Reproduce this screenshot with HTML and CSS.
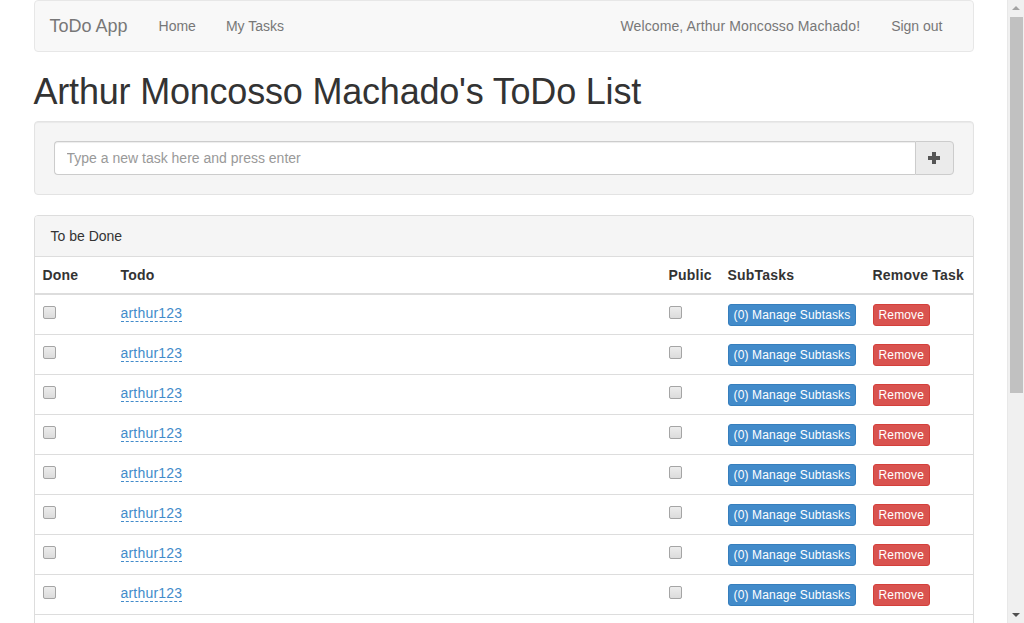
FILE: index.html
```html
<!DOCTYPE html>
<html lang="en">
<head>
<meta charset="utf-8">
<title>ToDo App</title>
<link rel="stylesheet" href="styles.css">
</head>
<body>
<div class="container">
  <nav class="navbar">
    <div class="nav-left">
      <a class="brand" href="#">ToDo App</a>
      <a class="nav-link" href="#">Home</a>
      <a class="nav-link" href="#">My Tasks</a>
    </div>
    <div class="nav-right">
      <span class="nav-link">Welcome, Arthur Moncosso Machado!</span>
      <a class="nav-link" href="#">Sign out</a>
    </div>
  </nav>

  <h1 class="title">Arthur Moncosso Machado's ToDo List</h1>

  <div class="well">
    <div class="input-group">
      <input class="form-control" type="text" placeholder="Type a new task here and press enter">
      <button class="btn-add" type="button" aria-label="Add">
        <svg width="12" height="12" viewBox="0 0 12 12"><path d="M4 0h4v4h4v4H8v4H4V8H0V4h4z" fill="#555"/></svg>
      </button>
    </div>
  </div>

  <div class="panel">
    <div class="panel-heading">To be Done</div>
    <table class="table">
      <colgroup>
        <col class="c-done"><col><col class="c-public"><col class="c-sub"><col class="c-remove">
      </colgroup>
      <thead>
        <tr><th>Done</th><th>Todo</th><th>Public</th><th>SubTasks</th><th>Remove Task</th></tr>
      </thead>
      <tbody>
        <tr><td><input type="checkbox" class="cb"></td><td><a class="editable" href="#">arthur123</a></td><td><input type="checkbox" class="cb"></td><td><button class="btn btn-primary">(0) Manage Subtasks</button></td><td><button class="btn btn-danger">Remove</button></td></tr>
        <tr><td><input type="checkbox" class="cb"></td><td><a class="editable" href="#">arthur123</a></td><td><input type="checkbox" class="cb"></td><td><button class="btn btn-primary">(0) Manage Subtasks</button></td><td><button class="btn btn-danger">Remove</button></td></tr>
        <tr><td><input type="checkbox" class="cb"></td><td><a class="editable" href="#">arthur123</a></td><td><input type="checkbox" class="cb"></td><td><button class="btn btn-primary">(0) Manage Subtasks</button></td><td><button class="btn btn-danger">Remove</button></td></tr>
        <tr><td><input type="checkbox" class="cb"></td><td><a class="editable" href="#">arthur123</a></td><td><input type="checkbox" class="cb"></td><td><button class="btn btn-primary">(0) Manage Subtasks</button></td><td><button class="btn btn-danger">Remove</button></td></tr>
        <tr><td><input type="checkbox" class="cb"></td><td><a class="editable" href="#">arthur123</a></td><td><input type="checkbox" class="cb"></td><td><button class="btn btn-primary">(0) Manage Subtasks</button></td><td><button class="btn btn-danger">Remove</button></td></tr>
        <tr><td><input type="checkbox" class="cb"></td><td><a class="editable" href="#">arthur123</a></td><td><input type="checkbox" class="cb"></td><td><button class="btn btn-primary">(0) Manage Subtasks</button></td><td><button class="btn btn-danger">Remove</button></td></tr>
        <tr><td><input type="checkbox" class="cb"></td><td><a class="editable" href="#">arthur123</a></td><td><input type="checkbox" class="cb"></td><td><button class="btn btn-primary">(0) Manage Subtasks</button></td><td><button class="btn btn-danger">Remove</button></td></tr>
        <tr><td><input type="checkbox" class="cb"></td><td><a class="editable" href="#">arthur123</a></td><td><input type="checkbox" class="cb"></td><td><button class="btn btn-primary">(0) Manage Subtasks</button></td><td><button class="btn btn-danger">Remove</button></td></tr>
        <tr><td><input type="checkbox" class="cb"></td><td><a class="editable" href="#">arthur123</a></td><td><input type="checkbox" class="cb"></td><td><button class="btn btn-primary">(0) Manage Subtasks</button></td><td><button class="btn btn-danger">Remove</button></td></tr>
      </tbody>
    </table>
  </div>
</div>

<div class="scrollbar" aria-hidden="true">
  <div class="sb-arrow sb-up"></div>
  <div class="sb-thumb"></div>
  <div class="sb-arrow sb-down"></div>
</div>
</body>
</html>
```

FILE: styles.css
```css
* { box-sizing: border-box; }
html { overflow: hidden; height: 100%; }
body {
  margin: 0;
  padding-right: 17px;
  font-family: "Liberation Sans", Arial, sans-serif;
  font-size: 14px;
  line-height: 20px;
  color: #333;
  background: #fff;
}
a { text-decoration: none; }

.container {
  width: 970px;
  margin: 0 auto;
  padding: 0 15px;
}

/* Navbar */
.navbar {
  display: flex;
  justify-content: space-between;
  height: 52px;
  background: #f8f8f8;
  border: 1px solid #e7e7e7;
  border-radius: 4px;
  margin-bottom: 20px;
}
.nav-left, .nav-right { display: flex; }
.nav-right { padding-right: 15px; }
.brand {
  padding: 15px 16px 15px 15px;
  font-size: 18px;
  line-height: 20px;
  color: #777;
}
.nav-link {
  padding: 15px;
  line-height: 20px;
  color: #777;
}
.nav-right .nav-link:first-child { padding-left: 11px; padding-right: 16px; letter-spacing: 0.1px; }

/* Title */
.title {
  margin: 20px 0 10px;
  font-size: 36px;
  font-weight: 500;
  line-height: 39px;
  letter-spacing: -0.2px;
  color: #333;
}

/* Well */
.well {
  padding: 19px;
  margin-bottom: 20px;
  background: #f5f5f5;
  border: 1px solid #e3e3e3;
  border-radius: 4px;
  box-shadow: inset 0 1px 1px rgba(0,0,0,.05);
}
.input-group { display: flex; }
.form-control {
  flex: 1;
  height: 34px;
  padding: 6px 12px;
  font-family: inherit;
  font-size: 14px;
  color: #555;
  background: #fff;
  border: 1px solid #ccc;
  border-right: 0;
  border-radius: 4px 0 0 4px;
  box-shadow: inset 0 1px 1px rgba(0,0,0,.075);
  outline: none;
}
.form-control::placeholder { color: #999; }
.btn-add {
  width: 39px;
  height: 34px;
  padding: 0;
  display: flex;
  align-items: center;
  justify-content: center;
  background: #ebebeb;
  border: 1px solid #ccc;
  border-radius: 0 4px 4px 0;
}

/* Panel */
.panel {
  border: 1px solid #ddd;
  border-radius: 4px;
  background: #fff;
}
.panel-heading {
  padding: 10px 15px 10px 16px;
  background: #f5f5f5;
  border-bottom: 1px solid #ddd;
  border-radius: 3px 3px 0 0;
  color: #333;
}
.table {
  width: 100%;
  border-collapse: collapse;
  table-layout: fixed;
}
.c-done { width: 78px; }
.c-public { width: 59px; }
.c-sub { width: 145px; }
.c-remove { width: 108px; }
.table th {
  padding: 8px;
  text-align: left;
  font-weight: bold;
  border-bottom: 2px solid #ddd;
  line-height: 20px;
  white-space: nowrap;
  letter-spacing: 0.2px;
}
.table td {
  padding: 8px;
  height: 39px;
  border-top: 1px solid #ddd;
  vertical-align: top;
  line-height: 20px;
}
.table tbody tr:first-child td { border-top: 0; }

.cb {
  appearance: none;
  -webkit-appearance: none;
  display: block;
  width: 13px;
  height: 13px;
  margin: 3px 0 0;
  border: 1px solid #a5a5a5;
  border-radius: 2px;
  background: linear-gradient(#ededed, #dcdcdc);
}
.editable {
  display: inline-block;
  color: #428bca;
  line-height: 16px;
  margin-top: 1px;
  border-bottom: 1px dashed #428bca;
  letter-spacing: 0.2px;
}

.btn {
  display: inline-block;
  height: 22px;
  margin-top: 1px;
  padding: 1px 5px;
  font-family: inherit;
  font-size: 12px;
  line-height: 18px;
  color: #fff;
  border: 1px solid transparent;
  border-radius: 3px;
  white-space: nowrap;
  letter-spacing: 0.15px;
}
.btn-primary { background: #428bca; border-color: #357ebd; }
.btn-danger { background: #d9534f; border-color: #d43f3a; }

/* Fake window scrollbar */
.scrollbar {
  position: fixed;
  top: 0;
  right: 0;
  width: 17px;
  height: 100%;
  background: #f0f0f0;
  border-left: 1px solid #e8e8e8;
}
.sb-thumb {
  position: absolute;
  top: 17px;
  left: 2px;
  width: 13px;
  height: 376px;
  background: #c1c1c1;
}
.sb-arrow {
  position: absolute;
  left: 4px;
  width: 0;
  height: 0;
  border-left: 4px solid transparent;
  border-right: 4px solid transparent;
}
.sb-up { top: 6px; border-bottom: 4px solid #a3a3a3; }
.sb-down { bottom: 6px; border-top: 4px solid #505050; }
```
